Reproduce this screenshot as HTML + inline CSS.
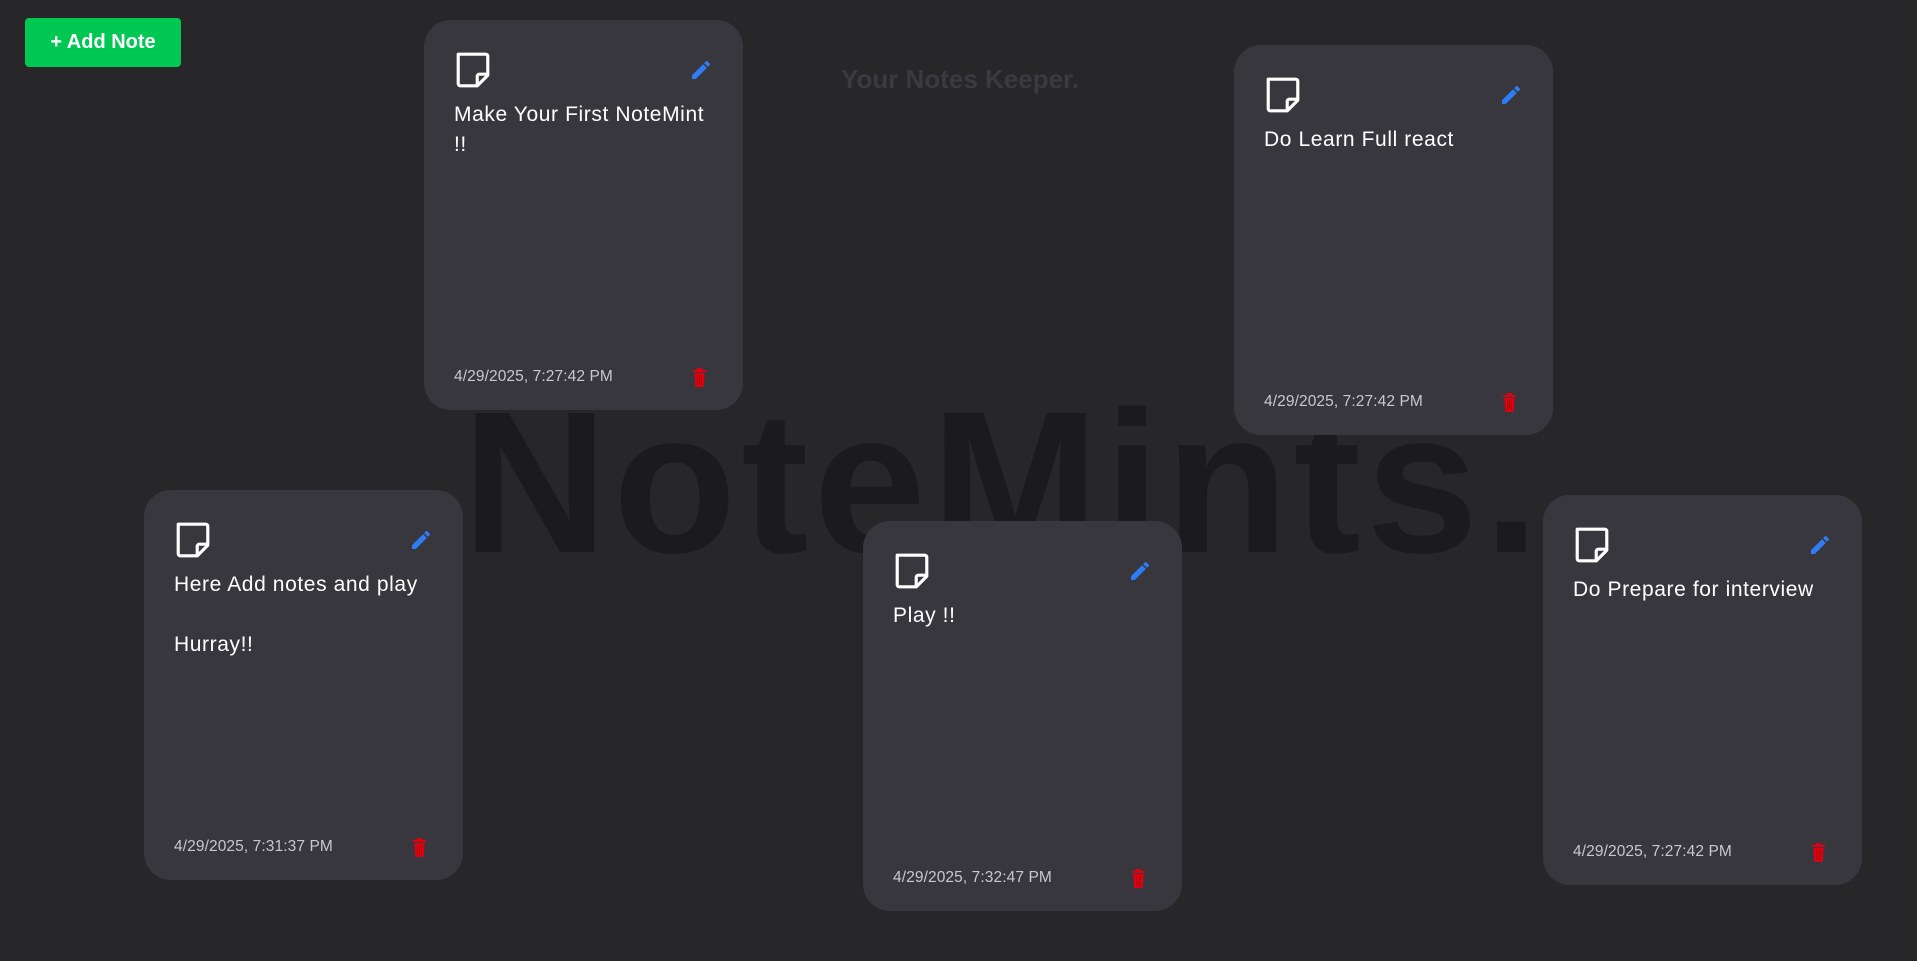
<!DOCTYPE html>
<html><head><style>
html,body{margin:0;padding:0;width:1917px;height:961px;overflow:hidden;background:#27272a;font-family:"Liberation Sans",sans-serif;}
.big{position:absolute;left:462px;top:381px;font-size:202px;font-weight:bold;color:#1b1b1d;letter-spacing:5px;line-height:1;white-space:nowrap;}
.sub{position:absolute;left:0;width:1920px;top:64px;text-align:center;font-size:26px;font-weight:bold;color:#3a3a3f;}
.btn{position:absolute;left:25px;top:18px;width:156px;height:49px;background:#00c853;border-radius:4px;color:#fff;font-weight:bold;font-size:20px;line-height:49px;text-align:center;}
.card{position:absolute;width:319px;height:390px;background:rgba(57,56,63,0.96);border-radius:27px;}
.card .ic{position:absolute;left:30px;top:31px;}
.card .pen{position:absolute;right:30px;top:38px;}
.card .txt{position:absolute;left:30px;top:80px;right:26px;color:#fff;font-size:21px;letter-spacing:0.6px;line-height:30px;}
.card .date{position:absolute;left:30px;bottom:24px;color:#c8c8cc;font-size:15.5px;letter-spacing:0.1px;}
.card .tr{position:absolute;right:36px;bottom:22px;}
</style></head><body>
<div class="big">NoteMints.</div>
<div class="sub">Your Notes Keeper.</div>
<div class="btn">+ Add Note</div>

<svg width="0" height="0" style="position:absolute">
<defs>
<symbol id="note" viewBox="0 0 36 36"><path d="M4 3h26a2 2 0 0 1 2 2v18l-10 10H6a2 2 0 0 1-2-2z" fill="none" stroke="#fff" stroke-width="3" stroke-linejoin="round"/><path d="M32 22h-8a2 2 0 0 0-2 2v9" fill="none" stroke="#fff" stroke-width="3"/></symbol>
<symbol id="pen" viewBox="0 0 24 24"><path d="M3 17.25V21h3.75L17.81 9.94l-3.75-3.75L3 17.25zM20.71 7.04a1 1 0 0 0 0-1.41l-2.34-2.34a1 1 0 0 0-1.41 0l-1.830 1.83 3.75 3.75 1.83-1.83z" fill="#2f7cf6"/></symbol>
<symbol id="trash" viewBox="0 0 16 22"><path d="M1 3h14v2H1zM5 1h6v2H5zM2.5 6h11l-1 15h-9z" fill="#e00010"/><path d="M6 8v11M8 8v11M10 8v11" stroke="#a0000a" stroke-width="0.8"/></symbol>
</defs></svg>

<div class="card" style="left:424px;top:20px">
<svg class="ic" width="38" height="38"><use href="#note"/></svg>
<svg class="pen" width="24" height="24"><use href="#pen"/></svg>
<div class="txt">Make Your First NoteMint !!</div>
<div class="date">4/29/2025, 7:27:42 PM</div>
<svg class="tr" width="15" height="21"><use href="#trash"/></svg>
</div>

<div class="card" style="left:1234px;top:45px">
<svg class="ic" width="38" height="38"><use href="#note"/></svg>
<svg class="pen" width="24" height="24"><use href="#pen"/></svg>
<div class="txt">Do Learn Full react</div>
<div class="date">4/29/2025, 7:27:42 PM</div>
<svg class="tr" width="15" height="21"><use href="#trash"/></svg>
</div>

<div class="card" style="left:144px;top:490px">
<svg class="ic" width="38" height="38"><use href="#note"/></svg>
<svg class="pen" width="24" height="24"><use href="#pen"/></svg>
<div class="txt">Here Add notes and play<br><br>Hurray!!</div>
<div class="date">4/29/2025, 7:31:37 PM</div>
<svg class="tr" width="15" height="21"><use href="#trash"/></svg>
</div>

<div class="card" style="left:863px;top:521px">
<svg class="ic" width="38" height="38"><use href="#note"/></svg>
<svg class="pen" width="24" height="24"><use href="#pen"/></svg>
<div class="txt">Play !!</div>
<div class="date">4/29/2025, 7:32:47 PM</div>
<svg class="tr" width="15" height="21"><use href="#trash"/></svg>
</div>

<div class="card" style="left:1543px;top:495px">
<svg class="ic" width="38" height="38"><use href="#note"/></svg>
<svg class="pen" width="24" height="24"><use href="#pen"/></svg>
<div class="txt">Do Prepare for interview</div>
<div class="date">4/29/2025, 7:27:42 PM</div>
<svg class="tr" width="15" height="21"><use href="#trash"/></svg>
</div>
</body></html>
